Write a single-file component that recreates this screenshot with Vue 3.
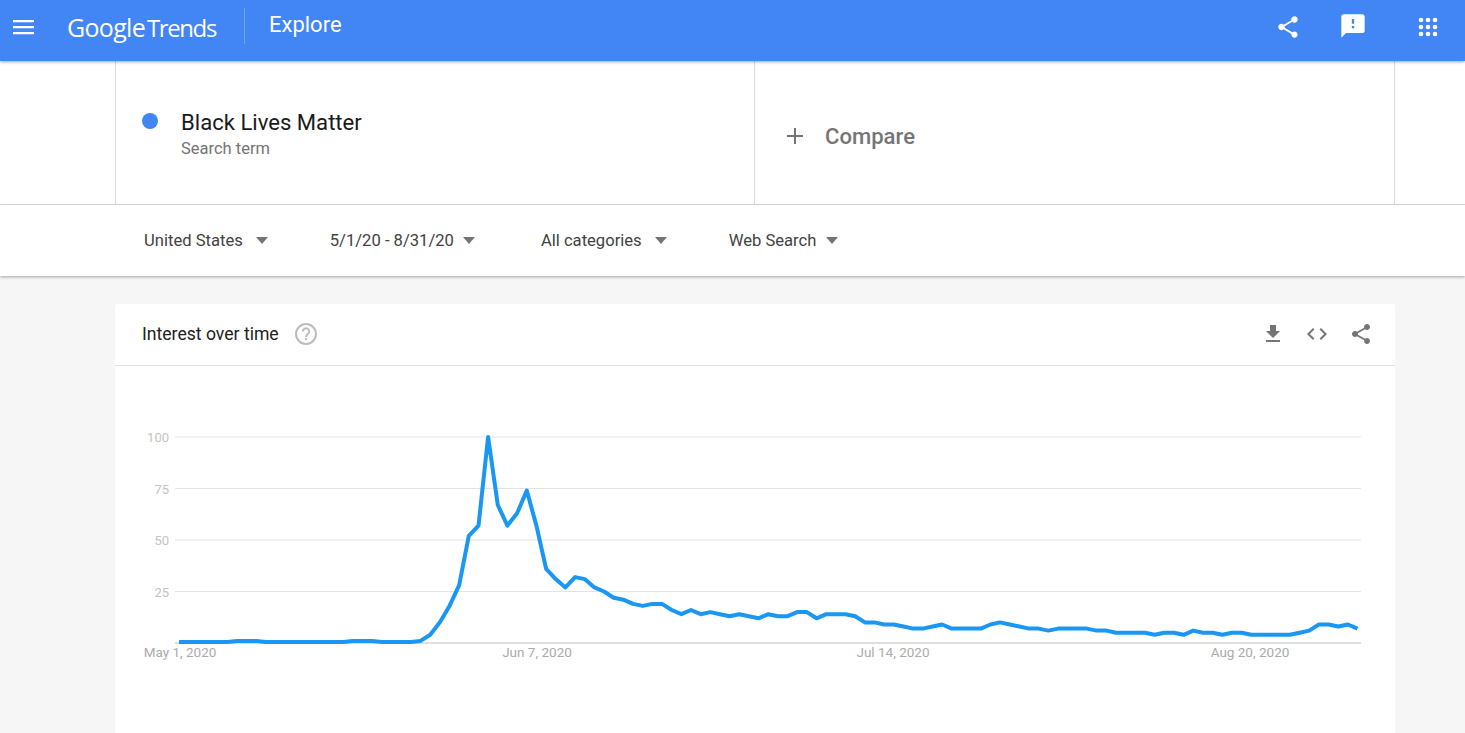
<script setup>
import { computed } from "vue";

const filters = [
  { label: "United States", gap: "filter-a" },
  { label: "5/1/20 - 8/31/20", gap: "filter-b" },
  { label: "All categories", gap: "filter-c" },
  { label: "Web Search", gap: "filter-d" },
];

const values = [
  0, 0, 0, 0, 0, 0, 1, 1, 1, 0, 0, 0, 0, 0, 0, 0, 0, 0, 1, 1, 1, 0, 0, 0, 0, 1,
  4, 10, 18, 28, 52, 57, 100, 67, 57, 63, 74, 57, 36, 31, 27, 32, 31, 27, 25,
  22, 21, 19, 18, 19, 19, 16, 14, 16, 14, 15, 14, 13, 14, 13, 12, 14, 13, 13,
  15, 15, 12, 14, 14, 14, 13, 10, 10, 9, 9, 8, 7, 7, 8, 9, 7, 7, 7, 7, 9,
  10, 9, 8, 7, 7, 6, 7, 7, 7, 7, 6, 6, 5, 5, 5, 5, 4, 5, 5, 4, 6, 5, 5, 4, 5,
  5, 4, 4, 4, 4, 4, 5, 6, 9, 9, 8, 9, 7,
];

const chart = { right: 1246, top: 71, bottom: 277 };
const startX = 64;
const stepX = 9.66;

const yFor = (v) => chart.bottom - ((chart.bottom - chart.top) * v) / 100 - (v === 0 ? 1 : 0);

const points = computed(() =>
  values.map((v, i) => `${(startX + i * stepX).toFixed(1)},${yFor(v).toFixed(1)}`).join(" ")
);

const gridLines = [100, 75, 50, 25];
const dateLabels = [
  { text: "May 1, 2020", x: 65 },
  { text: "Jun 7, 2020", x: 422 },
  { text: "Jul 14, 2020", x: 778 },
  { text: "Aug 20, 2020", x: 1135 },
];
</script>

<template>
  <div class="page">
    <header class="topbar">
      <svg class="menu-icon" width="24" height="24" viewBox="0 0 24 24">
        <path fill="#fff" d="M1 5h21v2.2H1zM1 11h21v2.2H1zM1 17h21v2.2H1z" />
      </svg>
      <div class="logo">
        <span class="logo-google">Google</span>
        <span class="logo-trends">Trends</span>
      </div>
      <div class="divider"></div>
      <span class="explore">Explore</span>
      <div class="topbar-actions">
        <svg width="26" height="26" viewBox="0 0 24 24">
          <path fill="#fff" d="M18 16.08c-.76 0-1.44.3-1.96.77L8.91 12.7c.05-.23.09-.46.09-.7s-.04-.47-.09-.7l7.05-4.11c.54.5 1.25.81 2.04.81 1.66 0 3-1.34 3-3s-1.34-3-3-3-3 1.34-3 3c0 .24.04.47.09.7L8.04 9.81C7.5 9.31 6.79 9 6 9c-1.66 0-3 1.34-3 3s1.34 3 3 3c.79 0 1.5-.31 2.04-.81l7.12 4.16c-.05.21-.08.43-.08.65 0 1.61 1.31 2.92 2.92 2.92s2.92-1.31 2.92-2.92-1.31-2.92-2.92-2.92z" />
        </svg>
        <svg class="feedback" width="28" height="28" viewBox="0 0 24 24">
          <path fill="#fff" d="M20 2H4c-1.1 0-2 .9-2 2v18l4-4h14c1.1 0 2-.9 2-2V4c0-1.100-.9-2-2-2zm-7 12h-2v-2h2v2zm0-4h-2V6h2v4z" />
        </svg>
        <svg class="apps" width="28" height="28" viewBox="0 0 24 24">
          <path fill="#fff" d="M6 8a2 2 0 1 0 0-4 2 2 0 0 0 0 4zm6 0a2 2 0 1 0 0-4 2 2 0 0 0 0 4zm6 0a2 2 0 1 0 0-4 2 2 0 0 0 0 4zM6 14a2 2 0 1 0 0-4 2 2 0 0 0 0 4zm6 0a2 2 0 1 0 0-4 2 2 0 0 0 0 4zm6 0a2 2 0 1 0 0-4 2 2 0 0 0 0 4zM6 20a2 2 0 1 0 0-4 2 2 0 0 0 0 4zm6 0a2 2 0 1 0 0-4 2 2 0 0 0 0 4zm6 0a2 2 0 1 0 0-4 2 2 0 0 0 0 4z" />
        </svg>
      </div>
    </header>

    <section class="search-row">
      <div class="search-grid">
        <div class="term-cell">
          <span class="dot"></span>
          <div>
            <div class="term-name">Black Lives Matter</div>
            <div class="term-type">Search term</div>
          </div>
        </div>
        <div class="compare-cell">
          <svg width="18" height="18" viewBox="0 0 18 18">
            <path fill="#757575" d="M8 1h2v7h7v2h-7v7H8v-7H1V8h7z" />
          </svg>
          <span class="compare-text">Compare</span>
        </div>
      </div>
    </section>

    <section class="filters">
      <div v-for="f in filters" :key="f.label" class="filter" :class="f.gap">
        <span>{{ f.label }}</span>
        <span class="caret"></span>
      </div>
    </section>

    <main class="content">
      <div class="card">
        <div class="card-header">
          <span class="card-title">Interest over time</span>
          <svg class="help" width="24" height="24" viewBox="0 0 24 24">
            <circle cx="12" cy="12" r="10" fill="none" stroke="#bdbdbd" stroke-width="2" />
            <path fill="none" stroke="#bdbdbd" stroke-width="2" d="M8.8 9.6a3.2 3.2 0 1 1 5 2.6c-1 .7-1.800 1.300-1.800 2.800" />
            <rect x="11" y="16.200" width="2" height="2" fill="#bdbdbd" />
          </svg>
          <div class="card-actions">
            <svg width="24" height="24" viewBox="0 0 24 24">
              <path fill="#757575" d="M19 9h-4V3H9v6H5l7 7 7-7zM5 18v2h14v-2H5z" />
            </svg>
            <svg width="24" height="24" viewBox="0 0 24 24">
              <path fill="#757575" d="M9.400 16.600 4.800 12l4.600-4.600L8 6l-6 6 6 6 1.400-1.400zm5.200 0 4.600-4.600-4.600-4.600L16 6l6 6-6 6-1.400-1.400z" />
            </svg>
            <svg width="24" height="24" viewBox="0 0 24 24">
              <path fill="#757575" d="M18 16.080c-.76 0-1.440.3-1.960.77L8.910 12.700c.05-.23.09-.46.09-.7s-.04-.47-.09-.7l7.050-4.110c.54.5 1.250.81 2.040.81 1.660 0 3-1.340 3-3s-1.340-3-3-3-3 1.340-3 3c0 .24.04.47.09.7L8.040 9.810C7.500 9.310 6.790 9 6 9c-1.660 0-3 1.340-3 3s1.340 3 3 3c.79 0 1.500-.31 2.040-.81l7.120 4.160c-.05.21-.08.43-.08.65 0 1.610 1.310 2.920 2.920 2.920s2.920-1.310 2.920-2.920-1.310-2.920-2.920-2.920z" />
            </svg>
          </div>
        </div>
        <svg class="chart" width="1280" height="368" viewBox="0 0 1280 368">
          <g v-for="g in gridLines" :key="g">
            <line :x1="60" :x2="chart.right" :y1="yFor(g)" :y2="yFor(g)" stroke="#e4e4e4" stroke-width="1" />
            <text class="axis-y" x="54" :y="yFor(g) + 5" text-anchor="end">{{ g }}</text>
          </g>
          <line :x1="60" :x2="chart.right" :y1="chart.bottom" :y2="chart.bottom" stroke="#bdbdbd" stroke-width="1" />
          <polyline :points="points" fill="none" stroke="#1a96f4" stroke-width="4" stroke-linejoin="round" />
          <text v-for="d in dateLabels" :key="d.text" class="axis-x" :x="d.x" y="291" text-anchor="middle">{{ d.text }}</text>
        </svg>
      </div>
    </main>
  </div>
</template>

<style>
html,
body {
  margin: 0;
  height: 100%;
  overflow: hidden;
}
</style>

<style scoped>
.page {
  height: 733px;
  overflow: hidden;
  display: flex;
  flex-direction: column;
  background: #f6f6f6;
  font-family: Roboto, "Liberation Sans", sans-serif;
}
.topbar {
  flex: none;
  height: 61px;
  display: flex;
  align-items: center;
  background: #4285f4;
  color: #fff;
  box-shadow: 0 1px 3px rgba(0, 0, 0, 0.35);
  position: relative;
  z-index: 2;
}
.menu-icon {
  margin-left: 12px;
  margin-top: -7px;
}
.logo {
  margin-left: 31px;
  width: 177px;
  display: flex;
  align-items: baseline;
  gap: 2px;
  margin-top: -7px;
  font-family: "Open Sans", sans-serif;
  font-size: 25px;
}
.logo-google {
  letter-spacing: -0.7px;
}
.logo-trends {
  font-size: 24px;
  letter-spacing: -1.400px;
}
.divider {
  width: 1px;
  height: 36px;
  margin-top: -9px;
  background: rgba(255, 255, 255, 0.25);
}
.explore {
  margin-left: 24px;
  margin-top: -13px;
  font-size: 22px;
}
.topbar-actions {
  margin-left: auto;
  margin-right: 23px;
  margin-top: -7px;
  display: flex;
  align-items: center;
}
.feedback {
  margin-left: 38px;
  margin-top: -2px;
}
.apps {
  margin-left: 47px;
}
.search-row {
  flex: none;
  height: 144px;
  background: #fff;
  border-bottom: 1px solid #dcdcdc;
  padding: 0 70px 0 115px;
  box-sizing: border-box;
}
.search-grid {
  height: 100%;
  display: grid;
  grid-template-columns: 638px 641px;
  border-left: 1px solid #dcdcdc;
  border-right: 1px solid #dcdcdc;
}
.term-cell {
  display: flex;
  align-items: flex-start;
  padding: 48px 0 0 26px;
  gap: 23px;
}
.dot {
  width: 16px;
  height: 16px;
  margin-top: 4px;
  border-radius: 50%;
  background: #4285f4;
  flex: none;
}
.term-name {
  font-size: 22.100px;
  line-height: 26px;
  color: #1a1a1a;
}
.term-type {
  margin-top: 5px;
  font-size: 16.500px;
  line-height: 18px;
  color: #757575;
}
.compare-cell {
  display: flex;
  align-items: center;
  gap: 21px;
  padding: 6px 0 0 31px;
  border-left: 1px solid #dcdcdc;
}
.compare-text {
  font-size: 22.100px;
  font-weight: 500;
  color: #757575;
}
.filters {
  flex: none;
  height: 71px;
  display: flex;
  align-items: center;
  background: #fff;
  padding: 0 0 0 144px;
  box-sizing: border-box;
  box-shadow: 0 1px 3px rgba(0, 0, 0, 0.35);
  position: relative;
  z-index: 1;
  font-size: 16.600px;
  color: #424242;
}
.filter {
  display: flex;
  align-items: center;
}
.filter-a {
  gap: 13px;
  margin-right: 62px;
}
.filter-b {
  gap: 9px;
  margin-right: 66px;
}
.filter-c {
  gap: 13px;
  margin-right: 62px;
}
.filter-d {
  gap: 10px;
}
.caret {
  width: 0;
  height: 0;
  border-left: 6px solid transparent;
  border-right: 6px solid transparent;
  border-top: 7px solid #757575;
}
.content {
  flex: 1;
  padding: 28px 70px 0 115px;
}
.card {
  width: 1280px;
  height: 440px;
  background: #fff;
  border-radius: 3px 3px 0 0;
}
.card-header {
  height: 62px;
  box-sizing: border-box;
  display: flex;
  align-items: center;
  padding: 0 22px 2px 27px;
  border-bottom: 1px solid #e0e0e0;
}
.card-title {
  font-size: 17.600px;
  color: #212121;
}
.help {
  margin-left: 15px;
}
.card-actions {
  margin-left: auto;
  display: flex;
  gap: 20px;
}
.chart {
  display: block;
}
.axis-y {
  font-size: 13px;
  fill: #c4c4c4;
}
.axis-x {
  font-size: 13.500px;
  fill: #ababab;
}
</style>
